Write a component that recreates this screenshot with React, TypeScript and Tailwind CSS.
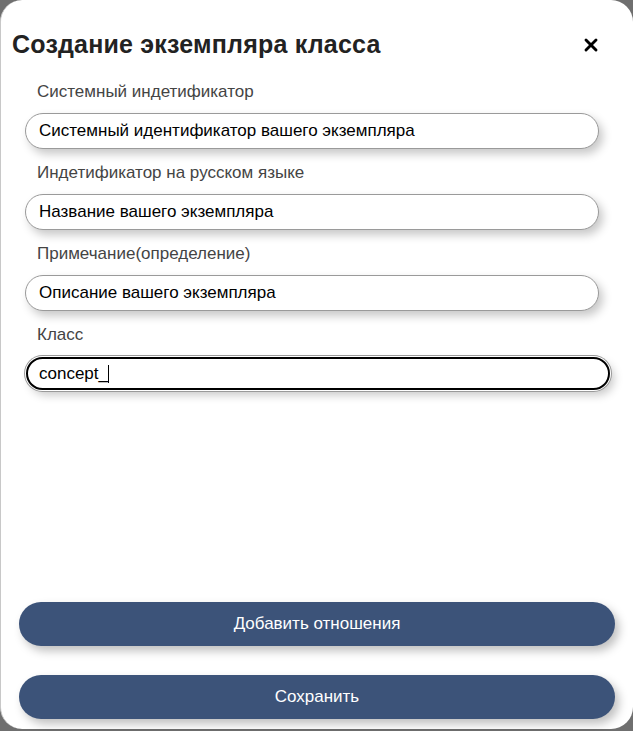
import { X } from "lucide-react"

const fields = [
  { label: "Системный индетификатор", value: "Системный идентификатор вашего экземпляра" },
  { label: "Индетификатор на русском языке", value: "Название вашего экземпляра" },
  { label: "Примечание(определение)", value: "Описание вашего экземпляра" },
]

export default function App() {
  return (
    <div className="h-[731px] w-[633px] bg-[#6f6f6f] font-['Liberation_Sans',Arial,sans-serif]">
      <div className="flex h-[729px] flex-col rounded-[22px] border-l border-[#c8c8c8] bg-white">
        <div className="flex h-[32px] items-center justify-between pl-[11px] pr-[32px] mt-[29px]">
          <h2 className="text-[25px] font-bold tracking-[0.2px] text-[#222]">Создание экземпляра класса</h2>
          <X className="h-[20px] w-[20px] text-black" strokeWidth={3.5} />
        </div>

        <div className="mt-[20px] flex flex-col">
          {fields.map((f) => (
            <div key={f.label} className="flex flex-col">
              <label className="ml-[36px] text-[17px] leading-[22px] text-[#444]">{f.label}</label>
              <div className="ml-[24px] mt-[10px] mb-[13px] flex h-[36px] w-[574px] items-center rounded-full border border-[#9a9a9a] bg-white pl-[13px] text-[17px] text-black shadow-[4px_5px_10px_rgba(0,0,0,0.22)]">
                {f.value}
              </div>
            </div>
          ))}
          <label className="ml-[36px] text-[17px] leading-[22px] text-[#444]">Класс</label>
          <div className="ml-[25px] mt-[11px] flex h-[33px] w-[584px] items-center rounded-full border-2 border-black bg-white pl-[11px] text-[17px] text-black shadow-[0_0_0_1px_#fff,0_0_0_2px_#9a9a9a,4px_5px_10px_rgba(0,0,0,0.22)]">
            concept_
            <span className="h-[18px] w-[1px] bg-black" />
          </div>
        </div>

        <div className="mt-auto flex flex-col gap-[29px] px-[18px] pb-[10px]">
          <button className="h-[44px] w-[596px] rounded-full bg-[#3c5379] text-[17px] text-white shadow-[4px_5px_10px_rgba(0,0,0,0.25)]">
            Добавить отношения
          </button>
          <button className="h-[44px] w-[596px] rounded-full bg-[#3c5379] text-[17px] text-white shadow-[4px_5px_10px_rgba(0,0,0,0.25)]">
            Сохранить
          </button>
        </div>
      </div>
    </div>
  )
}
